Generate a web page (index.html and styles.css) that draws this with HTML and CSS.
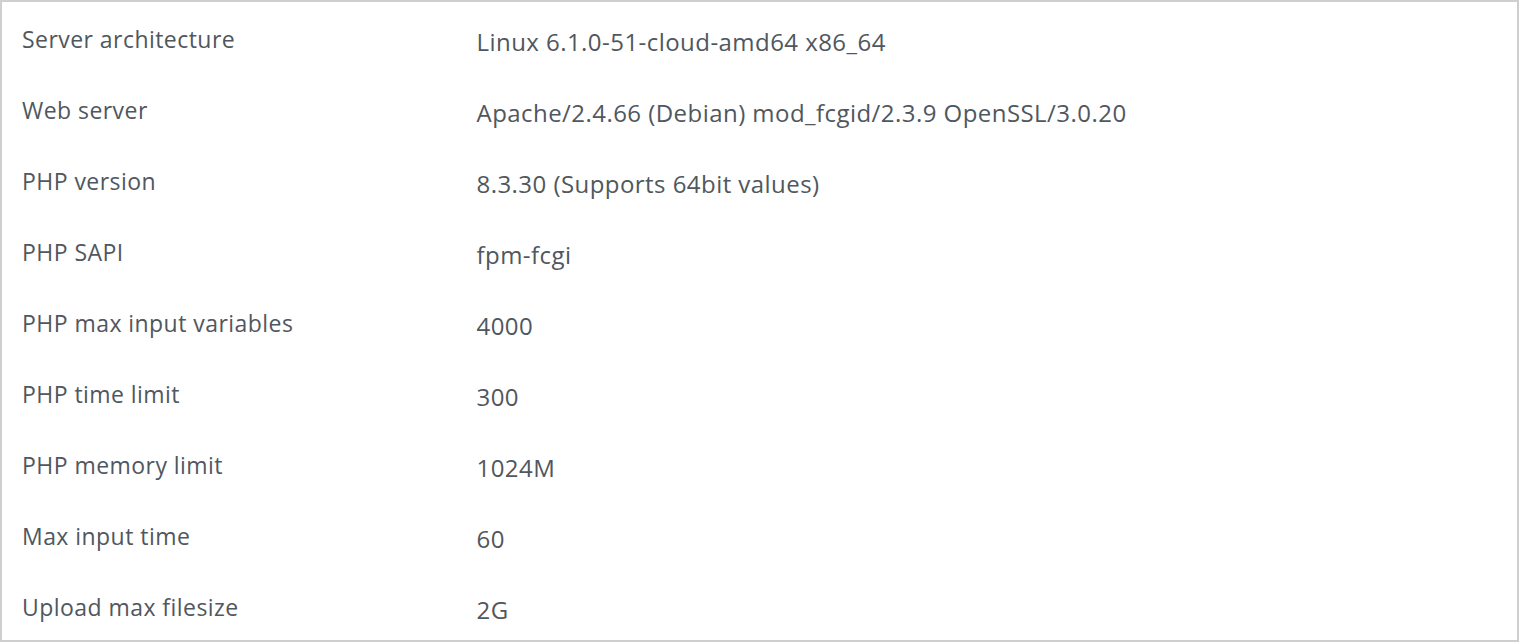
FILE: index.html
```html
<!DOCTYPE html>
<html lang="en">
<head>
<meta charset="utf-8">
<title>Server info</title>
<link rel="stylesheet" href="styles.css">
</head>
<body>
<div class="panel">
  <table class="info-table">
    <tbody>
      <tr><td class="label">Server architecture</td><td class="value">Linux 6.1.0-51-cloud-amd64 x86_64</td></tr>
      <tr><td class="label">Web server</td><td class="value">Apache/2.4.66 (Debian) mod_fcgid/2.3.9 OpenSSL/3.0.20</td></tr>
      <tr><td class="label">PHP version</td><td class="value">8.3.30 (Supports 64bit values)</td></tr>
      <tr><td class="label">PHP SAPI</td><td class="value">fpm-fcgi</td></tr>
      <tr><td class="label">PHP max input variables</td><td class="value">4000</td></tr>
      <tr><td class="label">PHP time limit</td><td class="value">300</td></tr>
      <tr><td class="label">PHP memory limit</td><td class="value">1024M</td></tr>
      <tr><td class="label">Max input time</td><td class="value">60</td></tr>
      <tr><td class="label">Upload max filesize</td><td class="value">2G</td></tr>
    </tbody>
  </table>
</div>
</body>
</html>
```
FILE: styles.css
```css
html, body {
  margin: 0;
  padding: 0;
  background: #ffffff;
}
body {
  font-family: "Open Sans", "Noto Sans", sans-serif;
  color: #50575e;
}
.panel {
  width: 1515px;
  height: 638px;
  border: 2px solid #cfcfcf;
  background: #fff;
  overflow: hidden;
}
.info-table {
  width: 100%;
  border-collapse: collapse;
  table-layout: fixed;
}
.info-table td {
  height: 71px;
  box-sizing: border-box;
  vertical-align: top;
  padding: 0 20px;
}
.label {
  width: 30%;
  font-size: 23px;
  letter-spacing: 0.45px;
  padding-top: 22px !important;
  line-height: 30px;
}
.value {
  font-size: 24px;
  letter-spacing: 0.45px;
  padding-top: 25px !important;
  line-height: 30px;
}
```
